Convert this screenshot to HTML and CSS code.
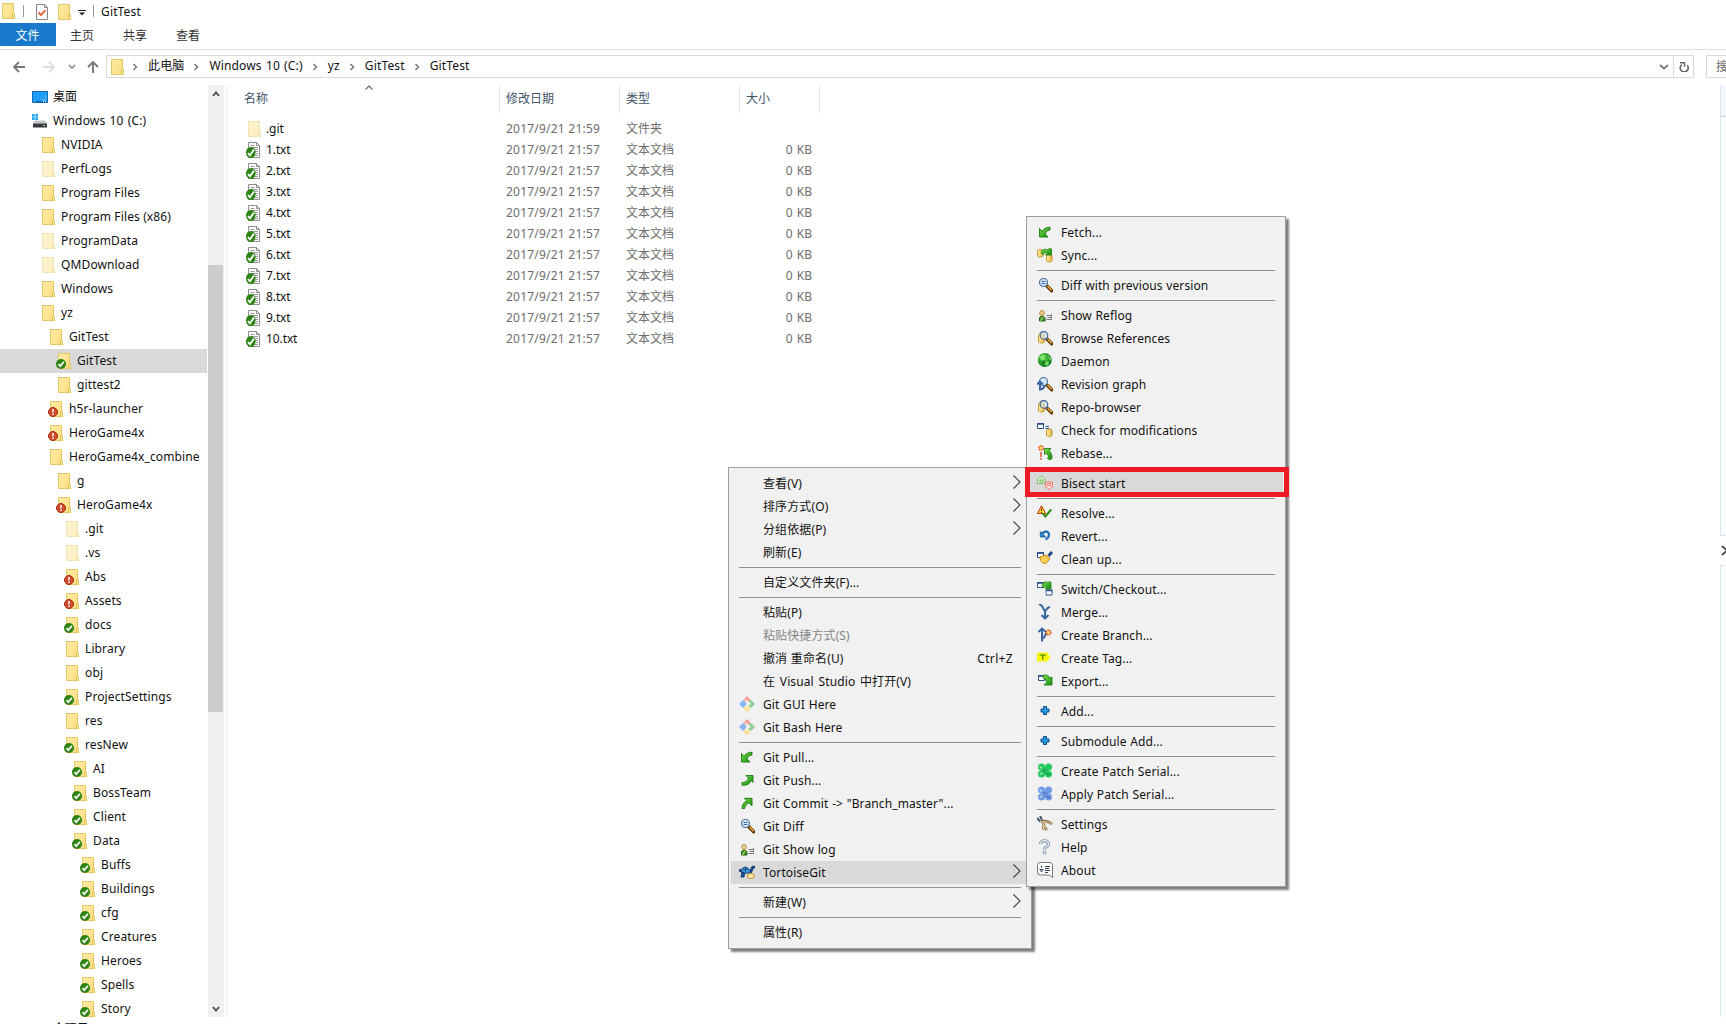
FILE: index.html
```
<!DOCTYPE html>
<html lang="zh-CN">
<head>
<meta charset="utf-8">
<title>GitTest</title>
<link rel="stylesheet" href="styles.css">
</head>
<body>
<svg class="defs" aria-hidden="true">
  <defs>
    <linearGradient id="gf" x1="0" y1="0" x2="1" y2="1"><stop offset="0" stop-color="#ffeba6"/><stop offset="1" stop-color="#fbdc7c"/></linearGradient>
    <linearGradient id="ga" x1="0" y1="0" x2="1" y2="1"><stop offset="0" stop-color="#7ce04c"/><stop offset="1" stop-color="#128a0c"/></linearGradient>
    <linearGradient id="gd" x1="0" y1="0" x2="1" y2="0"><stop offset="0" stop-color="#fff3a8"/><stop offset="1" stop-color="#e8b040"/></linearGradient>
    <radialGradient id="gg" cx=".4" cy=".35" r=".65"><stop offset="0" stop-color="#5fd84f"/><stop offset="1" stop-color="#0c7a1a"/></radialGradient>
  </defs>
  <symbol id="folder" viewBox="0 0 16 16"><path d="M2.500 .5h11v10.500h1v4.500h-12z" fill="url(#gf)" stroke="#e3c768"/><path d="M12.500 15.500v-4.500h2v4.500z" fill="#ffe69a" stroke="#dfbf58" stroke-width=".8"/></symbol>
  <symbol id="ok" viewBox="0 0 16 16"><circle cx="5" cy="11" r="5" fill="#2c8413"/><path d="M2.500 11.200l1.800 1.900 3.600-4.400" fill="none" stroke="#fff" stroke-width="1.700"/></symbol>
  <symbol id="bad" viewBox="0 0 16 16"><circle cx="5" cy="11" r="4.500" fill="#d24a28" stroke="#9c2c10"/><path d="M5 8v3.600M5 12.600v1.400" stroke="#fff" stroke-width="1.500"/></symbol>
  <symbol id="folder-ok" viewBox="0 0 16 16"><use href="#folder"/><use href="#ok"/></symbol>
  <symbol id="folder-bad" viewBox="0 0 16 16"><use href="#folder"/><use href="#bad"/></symbol>
  <symbol id="txt" viewBox="0 0 16 16"><path d="M2.500 .5h8l3 3v12h-11z" fill="#fff" stroke="#8f8f8f"/><path d="M10.500 .5v3h3" fill="none" stroke="#8f8f8f"/><path d="M4.500 3.500h4M4.500 5.500h7.500M7 7.500h5M9 9.500h3M10 11.500h2M9 13.500h3" stroke="#9a9a9a"/><ellipse cx="4.800" cy="10.500" rx="4.800" ry="5.500" fill="#2c8413"/><path d="M2 11l2 2.300 4-5.800" fill="none" stroke="#fff" stroke-width="1.800"/></symbol>
  <symbol id="desktop" viewBox="0 0 16 16"><path d="M.5 2.500h15v11h-15z" fill="#1f9dfa" stroke="#1568ac"/><path d="M8 12L15 5v7z" fill="#46b0fb" opacity=".6"/><path d="M1 12.500h14" stroke="#0e6dc0"/><path d="M2 12.500h1M11 12.500h1M13 12.500h1" stroke="#fff"/></symbol>
  <symbol id="drive" viewBox="0 0 16 16"><path d="M0 1h2.700v2.700h-2.700zM3.300 1h2.700v2.700h-2.700zM0 4.300h2.700v2.700h-2.700zM3.300 4.300h2.700v2.700h-2.700z" fill="#25a9ee"/><path d="M3 7.500h10l2 3h-14z" fill="#c3c5c8"/><path d="M1 10.500h14v4h-14z" fill="#36393d"/><path d="M11 12.500h2" stroke="#8df08d"/></symbol>
  <symbol id="prop" viewBox="0 0 16 16"><path d="M2.500 .5h8l3 3v12h-11z" fill="#fafafa" stroke="#888"/><path d="M10.500 .5v3h3" fill="none" stroke="#888"/><path d="M4.500 8.500l2.500 2.500 4.500-5" fill="none" stroke="#e2592c" stroke-width="1.800"/></symbol>
  <symbol id="pull" viewBox="0 0 16 16"><path d="M2.500 4.500v8.500h8.500l-2.800-2.700c.3-2.300 1.800-3.800 4.800-4.300v-2.800c-4 .1-6.800 1.800-7.900 4.300z" fill="url(#ga)" stroke="#187c10" stroke-width=".9"/></symbol>
  <symbol id="push" viewBox="0 0 16 16"><path d="M14 3.500h-7l2.200 2.200c0 3-2.200 4.600-6.200 4.800v2.700c5 .3 8.500-1.500 8.800-5l2.200 2.300z" fill="url(#ga)" stroke="#187c10" stroke-width=".9"/></symbol>
  <symbol id="commit" viewBox="0 0 16 16"><path d="M13 3.300h-7.600l2.300 2.300c-3 1.800-4.500 4.200-4.700 7.900h2.700c.3-2.700 1.700-4.700 4.300-5.700l3 3z" fill="url(#ga)" stroke="#187c10" stroke-width=".9"/></symbol>
  <symbol id="db" viewBox="0 0 16 16"><path d="M.5 3c0-2 5.500-2 5.500 0v4.500c0 2-5.500 2-5.500 0z" fill="url(#gd)" stroke="#bd8c26" stroke-width=".9"/></symbol>
  <symbol id="sync" viewBox="0 0 16 16"><use href="#db" y="1"/><use href="#db" x="9" y="6"/><path d="M4.500 6.500c0-4 3-5.300 6-3.500l1.500-1.500 2.500.5v6h-6l2-2c-2-1.200-3.500-.5-4 1.500z" fill="url(#ga)" stroke="#187c10" stroke-width=".8"/></symbol>
  <symbol id="lens" viewBox="0 0 16 16"><path d="M10 9l4.800 4.800" stroke="#5b3406" stroke-width="3.400" stroke-linecap="round"/><path d="M10.500 9l4.200 4.200" stroke="#e7a838" stroke-width="1.600"/><circle cx="6.500" cy="5.500" r="4" fill="#d6e8f8" stroke="#4a6b94" stroke-width="1.100"/></symbol>
  <symbol id="diff" viewBox="0 0 16 16"><use href="#lens"/><path d="M4.500 4.500h4M4.500 6.500h4" stroke="#3a6fb5"/></symbol>
  <symbol id="browse" viewBox="0 0 16 16"><use href="#lens"/><path d="M1.500 5.500c0-2 6-2 6 0v6c0 2-6 2-6 0z" fill="url(#gd)" stroke="#bd8c26" stroke-width=".9"/><circle cx="7" cy="5.500" r="3.800" fill="#d6e8f8" fill-opacity=".55" stroke="#4a6b94" stroke-width="1.100"/></symbol>
  <symbol id="log" viewBox="0 0 16 16"><path d="M2.500 14v-3.500q2.500-3 5.500 0v3.500z" fill="#3f9a22" stroke="#24600f"/><circle cx="5" cy="6" r="2.400" fill="#f2cf86" stroke="#a17b35" stroke-width=".8"/><path d="M3.500 14q1.500-3.500 3-4" stroke="#bfe59c" fill="none"/><path d="M9.500 8.500h5M10.500 10.500h4M9.500 12.500h5" stroke="#777"/><path d="M14.500 7v6" stroke="#888"/></symbol>
  <symbol id="globe" viewBox="0 0 16 16"><circle cx="7.800" cy="7" r="7" fill="url(#gg)"/><path d="M2 4l4-2.500 3 2-2 1 1 2-2 1.500-3-2zM11 3l3 2v3l-2-2zM8 8l4 1-1 4-3-1z" fill="#93ec79" opacity=".7"/><path d="M6 7l3 1-2 4-3-3z" fill="#0a6414" opacity=".6"/></symbol>
  <symbol id="graph" viewBox="0 0 16 16"><use href="#lens"/><path d="M0 8.500l3-3 3 3M3 6v7.500c2 0 3.500-1 5-4" fill="none" stroke="#3a66a4" stroke-width="2"/></symbol>
  <symbol id="win" viewBox="0 0 16 16"><path d="M.5 1.500h6v5h-6z" fill="#fff" stroke="#2b5189"/><path d="M0 2h7" stroke="#2b5189" stroke-width="1.600"/></symbol>
  <symbol id="check" viewBox="0 0 16 16"><use href="#win"/><path d="M8.500 4.500h3.500M8.500 6.500h3.500" stroke="#2b5189"/><use href="#db" x="9" y="5.500"/></symbol>
  <symbol id="rebase" viewBox="0 0 16 16"><circle cx="4" cy="3" r="2.200" fill="#ffe06a" stroke="#e4562a" stroke-width="1.500" stroke-dasharray="1.400 .6"/><path d="M4 7v5M4 13v1.800" stroke="#cf2a10" stroke-width="1.200"/><path d="M7.500 3.500h6.500l-1.800 2c2.300 2.500 3 5 2.800 8-1 1.400-3 1.400-4.500 0l1-2-1.500-3.500-2.500 1.500z" fill="url(#ga)" stroke="#187c10" stroke-width=".8"/></symbol>
  <symbol id="bisect" viewBox="0 0 16 16"><path d="M.5 8.500v-4.500l2-1 2-2.500 2 2.500 1.500 1v4.500zM3 5h3v2h-3z" fill="#e0f0da" stroke="#7cc06a"/><path d="M8.500 7h7v5l-1.500.5-2 2.500-2-2.500-1.500-.5zM10.500 8.500h3v2h-3z" fill="#fae2de" stroke="#e6796c"/></symbol>
  <symbol id="resolve" viewBox="0 0 16 16"><path d="M4.500 .8l4.200 7.700h-8.200z" fill="#ffe51c" stroke="#c62812"/><path d="M4.500 3.500v2.500M4.500 6.800v1" stroke="#5c1500"/><path d="M5.500 8l2.800 3.500 6-7" fill="none" stroke="#2a8a13" stroke-width="2"/></symbol>
  <symbol id="revert" viewBox="0 0 16 16"><path d="M5 6.500c1-3.500 7-4 7 0 0 2.500-1.500 4-3.500 5" fill="none" stroke="#1f70b8" stroke-width="2.200"/><path d="M3.300 3.500v5.500h5.500z" fill="#2d86cf" stroke="#155c9f" stroke-width=".8"/></symbol>
  <symbol id="clean" viewBox="0 0 16 16"><use href="#win"/><path d="M3 6l6-2 4 3.500-3.500 4.500c-3 1.500-6.500-1-6.500-6z" fill="#f9c846" stroke="#ca8a18"/><path d="M5 8l3 3M7 6.500l3 3" stroke="#fff0a0"/><path d="M11.500 5l3.500-4" stroke="#174a86" stroke-width="2.800"/></symbol>
  <symbol id="switch" viewBox="0 0 16 16"><use href="#win"/><use href="#win" x="8.500" y="7.500"/><path d="M5 5.500c0-4 3-5.500 6-4l1.500-1 1.500 1v6.300h-6l2-2c-1-1-2.500-.5-3 1z" fill="url(#ga)" stroke="#187c10" stroke-width=".8"/></symbol>
  <symbol id="merge" viewBox="0 0 16 16"><path d="M2 0l3 2 3 5.500 2.500-3.500 2.500-1M8 7v7M4.500 11l3.500 3.500 3.500-3.500" fill="none" stroke="#3a66a4" stroke-width="2"/></symbol>
  <symbol id="branch" viewBox="0 0 16 16"><path d="M5 14.500v-13M1.500 5l3.500-3.500 4 3.500M5 12c2-1 3.500-3 4-6" fill="none" stroke="#3a66a4" stroke-width="2"/><circle cx="11.500" cy="5.500" r="2.300" fill="#ffe06a" stroke="#e4562a" stroke-width="1.600" stroke-dasharray="1.300 .5"/></symbol>
  <symbol id="tag" viewBox="0 0 16 16"><path d="M0 2.500h10l3.500 4.500-3.500 4.500h-10z" fill="#fbf80c"/><path d="M2.500 5h6.500M5.700 5v4.500" stroke="#39791b" stroke-width="1.200"/></symbol>
  <symbol id="export" viewBox="0 0 16 16"><use href="#win" x="1" y="1"/><path d="M6 2.500c3-1.500 6 0 6.500 2.500l2.500-1v8h-8l2.500-2.200c0-2.500-1-4-3.500-5z" fill="url(#ga)" stroke="#187c10" stroke-width=".8"/></symbol>
  <symbol id="add" viewBox="0 0 16 16"><path d="M6.500 3.500h3v2.500h2.500v3h-2.500v2.500h-3v-2.500h-2.500v-3h2.500z" fill="#2a9ae0" stroke="#0d4f8c"/></symbol>
  <symbol id="patch" viewBox="0 0 16 16"><circle cx="4.500" cy="4" r="3.500" fill="currentColor"/><circle cx="11.500" cy="4" r="3.500" fill="currentColor"/><circle cx="4.500" cy="11" r="3.500" fill="currentColor"/><circle cx="11.500" cy="11" r="3.500" fill="currentColor"/><path d="M4.500 4.500h7v6h-7z" fill="currentColor"/><path d="M2.500 3.500l2.500 2M3 11.500l2.500-2" stroke="#fff" opacity=".6" stroke-width="1.500"/><path d="M9 10l4 2" stroke="#033" stroke-width="1.500" opacity=".3"/><path d="M6 7.500h.8M9 7.500h.8M7.500 6v.8M7.500 9.300v.8" stroke="#114" stroke-width=".8" opacity=".7"/></symbol>
  <symbol id="tools" viewBox="0 0 16 16"><path d="M0 2l3 3.500M3 0l2 4" stroke="#44556b" stroke-width="2"/><path d="M4 4.500c3.500 2 3 5 2 9M5.500 5.500c3-1 6 0 9.500 2.500M6.500 8c.5 3 2.500 5 3.500 6" fill="none" stroke="#7a6444" stroke-width="2.600"/><path d="M4.500 5c3 2 2.500 5 1.500 8.500M6 6c3-1 6 0 8.500 2M7 9c.5 2 1.500 3.500 2.800 4.600" fill="none" stroke="#dcc294" stroke-width="1.400"/></symbol>
  <symbol id="help" viewBox="0 0 16 16"><path d="M3.500 5c0-4.500 8-4.500 8 0 0 3-4 2.500-4 5.500" fill="none" stroke="#7890a8" stroke-width="3"/><path d="M3.500 5c0-4.500 8-4.500 8 0 0 3-4 2.500-4 5.500" fill="none" stroke="#edf3f9" stroke-width="1.200"/><circle cx="7.500" cy="13.500" r="1.500" fill="#edf3f9" stroke="#7890a8"/></symbol>
  <symbol id="about" viewBox="0 0 16 16"><path d="M3.500 .5h9q3 0 3 3v12l-3-2.500h-9q-3 0-3-3v-6.500q0-3 3-3z" fill="#fff" stroke="#777"/><path d="M4.500 3.800v2M2.500 7.500h4M3 9h3M8 4.500h5M8 6.500h4M8 8.500h5M8 10.500h3" stroke="#34435c" stroke-width="1.100"/></symbol>
  <symbol id="git" viewBox="0 0 16 16"><path d="M8 0l3.700 3.700-2 2-4-3.400z" fill="#f09a92"/><path d="M5.300 2.700l3 3-1.300 1.300-2.700-3z" fill="#f09a92"/><path d="M4 4l4 4-4 4-4-4z" fill="#8ab4f8"/><path d="M12 4l4 4-4 4-3-2.500 1.500-1.500-1.500-2z" fill="#8ccf94"/><path d="M8 16l-3.500-3.500 3.200-3 4 3z" fill="#fbe08a"/><path d="M6.500 4.500l2 2v6M8.500 6l3 2.500" stroke="#f6f6f6" stroke-width="1.300" fill="none"/></symbol>
  <symbol id="tortoise" viewBox="0 0 16 16"><path d="M2 6.500q4-7 9 0l1 2q-5 2-11-1z" fill="#3a9ad8" stroke="#123e78"/><path d="M11 7q1-3 2-4.500l2.500-.5v2l-1.500.5-1.500 4zM1 5l-1 2 3 1zM3 8.500l-1 4.500 3 0 .5-3.500z" fill="#1d55a4" stroke="#0d2f66" stroke-width=".9"/><path d="M4 5.500h5M6.500 3.500v4" stroke="#123e78" stroke-width=".8"/><ellipse cx="11.800" cy="12" rx="3.600" ry="2.500" fill="#ffe9a6" stroke="#c28b2b"/></symbol>
  <symbol id="chev" viewBox="0 0 8 14"><path d="M.5 .5l6.500 6.500-6.500 6.500" fill="none" stroke="#333c48" stroke-width="1.100"/></symbol>
  <symbol id="crumb" viewBox="0 0 6 8"><path d="M1.500 1l3 3-3 3" fill="none" stroke="#777" stroke-width="1.500"/></symbol>
</svg>

<header class="titlebar">
  <svg class="ic"><use href="#folder"/></svg><i class="bar"></i>
  <svg class="ic prop"><use href="#prop"/></svg><svg class="ic second"><use href="#folder"/></svg>
  <svg class="drop" viewBox="0 0 8 6"><path d="M0 .5h8" stroke="#222"/><path d="M1 2.500h6l-3 3z" fill="#222"/></svg>
  <i class="bar b2"></i><span class="title">GitTest</span>
</header>
<nav class="tabs"><span class="file">文件</span><span>主页</span><span>共享</span><span>查看</span></nav>
<div class="navrow">
  <svg class="arrow back" viewBox="0 0 12 12"><path d="M12 6h-11M6 1l-5 5 5 5" fill="none" stroke="#777" stroke-width="1.800"/></svg>
  <svg class="arrow fwd" viewBox="0 0 12 12"><path d="M0 6h11M6 1l5 5-5 5" fill="none" stroke="#ddd" stroke-width="1.800"/></svg>
  <svg class="recent" viewBox="0 0 8 6"><path d="M1 1l3 3 3-3" fill="none" stroke="#888" stroke-width="1.600"/></svg>
  <svg class="arrow up" viewBox="0 0 12 12"><path d="M6 12v-11M1 6l5-5 5 5" fill="none" stroke="#777" stroke-width="1.900"/></svg>
  <div class="address">
    <svg class="ic"><use href="#folder"/></svg>
    <svg class="cr"><use href="#crumb"/></svg><span>此电脑</span>
    <svg class="cr"><use href="#crumb"/></svg><span class="drive">Windows 10 (C:)</span>
    <svg class="cr"><use href="#crumb"/></svg><span>yz</span>
    <svg class="cr"><use href="#crumb"/></svg><span>GitTest</span>
    <svg class="cr"><use href="#crumb"/></svg><span>GitTest</span>
    <svg class="more" viewBox="0 0 10 6"><path d="M1 1l4 3.500 4-3.500" fill="none" stroke="#777" stroke-width="1.800"/></svg>
    <div class="refresh"><svg viewBox="0 0 10 10"><path d="M8.200 3.200a4 4 0 1 1-5.400-.5" fill="none" stroke="#666" stroke-width="1.600"/><path d="M1 .8h4.500v4" fill="none" stroke="#666" stroke-width="1.500"/></svg></div>
  </div>
  <div class="search">搜</div>
</div>

<main class="main">
  <aside class="tree">
    <div class="row l0"><svg class="ic"><use href="#desktop"/></svg>桌面</div>
    <div class="row l0 drive"><svg class="ic"><use href="#drive"/></svg>Windows 10 (C:)</div>
    <div class="row l1"><svg class="ic"><use href="#folder"/></svg>NVIDIA</div>
    <div class="row l1"><svg class="ic dim"><use href="#folder"/></svg>PerfLogs</div>
    <div class="row l1"><svg class="ic"><use href="#folder"/></svg>Program Files</div>
    <div class="row l1"><svg class="ic"><use href="#folder"/></svg>Program Files (x86)</div>
    <div class="row l1"><svg class="ic dim"><use href="#folder"/></svg>ProgramData</div>
    <div class="row l1"><svg class="ic dim"><use href="#folder"/></svg>QMDownload</div>
    <div class="row l1"><svg class="ic"><use href="#folder"/></svg>Windows</div>
    <div class="row l1"><svg class="ic"><use href="#folder"/></svg>yz</div>
    <div class="row l2"><svg class="ic"><use href="#folder"/></svg>GitTest</div>
    <div class="row l3 selected"><svg class="ic"><use href="#folder-ok"/></svg>GitTest</div>
    <div class="row l3"><svg class="ic"><use href="#folder"/></svg>gittest2</div>
    <div class="row l2"><svg class="ic"><use href="#folder-bad"/></svg>h5r-launcher</div>
    <div class="row l2"><svg class="ic"><use href="#folder-bad"/></svg>HeroGame4x</div>
    <div class="row l2"><svg class="ic"><use href="#folder"/></svg>HeroGame4x_combine</div>
    <div class="row l3"><svg class="ic"><use href="#folder"/></svg>g</div>
    <div class="row l3"><svg class="ic"><use href="#folder-bad"/></svg>HeroGame4x</div>
    <div class="row l4"><svg class="ic dim"><use href="#folder"/></svg>.git</div>
    <div class="row l4"><svg class="ic dim"><use href="#folder"/></svg>.vs</div>
    <div class="row l4"><svg class="ic"><use href="#folder-bad"/></svg>Abs</div>
    <div class="row l4"><svg class="ic"><use href="#folder-bad"/></svg>Assets</div>
    <div class="row l4"><svg class="ic"><use href="#folder-ok"/></svg>docs</div>
    <div class="row l4"><svg class="ic"><use href="#folder"/></svg>Library</div>
    <div class="row l4"><svg class="ic"><use href="#folder"/></svg>obj</div>
    <div class="row l4"><svg class="ic"><use href="#folder-ok"/></svg>ProjectSettings</div>
    <div class="row l4"><svg class="ic"><use href="#folder"/></svg>res</div>
    <div class="row l4"><svg class="ic"><use href="#folder-ok"/></svg>resNew</div>
    <div class="row l5"><svg class="ic"><use href="#folder-ok"/></svg>AI</div>
    <div class="row l5"><svg class="ic"><use href="#folder-ok"/></svg>BossTeam</div>
    <div class="row l5"><svg class="ic"><use href="#folder-ok"/></svg>Client</div>
    <div class="row l5"><svg class="ic"><use href="#folder-ok"/></svg>Data</div>
    <div class="row l6"><svg class="ic"><use href="#folder-ok"/></svg>Buffs</div>
    <div class="row l6"><svg class="ic"><use href="#folder-ok"/></svg>Buildings</div>
    <div class="row l6"><svg class="ic"><use href="#folder-ok"/></svg>cfg</div>
    <div class="row l6"><svg class="ic"><use href="#folder-ok"/></svg>Creatures</div>
    <div class="row l6"><svg class="ic"><use href="#folder-ok"/></svg>Heroes</div>
    <div class="row l6"><svg class="ic"><use href="#folder-ok"/></svg>Spells</div>
    <div class="row l6"><svg class="ic"><use href="#folder-ok"/></svg>Story</div>
  </aside>
  <div class="scroll">
    <svg viewBox="0 0 8 6"><path d="M1 5l3-3.500 3 3.500" fill="none" stroke="#505050" stroke-width="1.900"/></svg>
    <div class="thumb"></div>
    <svg viewBox="0 0 8 6"><path d="M1 1l3 3.500 3-3.500" fill="none" stroke="#505050" stroke-width="1.900"/></svg>
  </div>
  <section class="list">
    <div class="head"><span>名称<svg class="sort" viewBox="0 0 8 5"><path d="M.5 4.500l3.500-3.500 3.500 3.500" fill="none" stroke="#666" stroke-width="1.100"/></svg></span><span>修改日期</span><span>类型</span><span>大小</span></div>
    <div class="frow"><span class="name"><svg class="ic dim"><use href="#folder"/></svg>.git</span><span class="date">2017/9/21 21:59</span><span>文件夹</span><span></span></div>
    <div class="frow"><span class="name"><svg class="ic"><use href="#txt"/></svg>1.txt</span><span class="date">2017/9/21 21:57</span><span>文本文档</span><span>0 KB</span></div>
    <div class="frow"><span class="name"><svg class="ic"><use href="#txt"/></svg>2.txt</span><span class="date">2017/9/21 21:57</span><span>文本文档</span><span>0 KB</span></div>
    <div class="frow"><span class="name"><svg class="ic"><use href="#txt"/></svg>3.txt</span><span class="date">2017/9/21 21:57</span><span>文本文档</span><span>0 KB</span></div>
    <div class="frow"><span class="name"><svg class="ic"><use href="#txt"/></svg>4.txt</span><span class="date">2017/9/21 21:57</span><span>文本文档</span><span>0 KB</span></div>
    <div class="frow"><span class="name"><svg class="ic"><use href="#txt"/></svg>5.txt</span><span class="date">2017/9/21 21:57</span><span>文本文档</span><span>0 KB</span></div>
    <div class="frow"><span class="name"><svg class="ic"><use href="#txt"/></svg>6.txt</span><span class="date">2017/9/21 21:57</span><span>文本文档</span><span>0 KB</span></div>
    <div class="frow"><span class="name"><svg class="ic"><use href="#txt"/></svg>7.txt</span><span class="date">2017/9/21 21:57</span><span>文本文档</span><span>0 KB</span></div>
    <div class="frow"><span class="name"><svg class="ic"><use href="#txt"/></svg>8.txt</span><span class="date">2017/9/21 21:57</span><span>文本文档</span><span>0 KB</span></div>
    <div class="frow"><span class="name"><svg class="ic"><use href="#txt"/></svg>9.txt</span><span class="date">2017/9/21 21:57</span><span>文本文档</span><span>0 KB</span></div>
    <div class="frow"><span class="name"><svg class="ic"><use href="#txt"/></svg>10.txt</span><span class="date">2017/9/21 21:57</span><span>文本文档</span><span>0 KB</span></div>
  </section>
  <aside class="side">
    <div class="side-head"></div><div class="side-top"></div>
    <div class="side-gap"><svg viewBox="0 0 7 11"><path d="M1 1l5 4.500-5 4.500" fill="none" stroke="#444" stroke-width="1.800"/></svg></div>
    <div class="side-bottom"></div>
  </aside>
</main>
<footer class="status">11 个项目</footer>

<div class="menu ctx">
  <div class="item"><i></i>查看(V)<svg class="chev"><use href="#chev"/></svg></div>
  <div class="item"><i></i>排序方式(O)<svg class="chev"><use href="#chev"/></svg></div>
  <div class="item"><i></i>分组依据(P)<svg class="chev"><use href="#chev"/></svg></div>
  <div class="item"><i></i>刷新(E)</div>
  <hr>
  <div class="item"><i></i>自定义文件夹(F)...</div>
  <hr>
  <div class="item"><i></i>粘贴(P)</div>
  <div class="item off"><i></i>粘贴快捷方式(S)</div>
  <div class="item"><i></i>撤消 重命名(U)<span class="key">Ctrl+Z</span></div>
  <div class="item vs"><i></i>在 Visual Studio 中打开(V)</div>
  <div class="item"><svg class="mi"><use href="#git"/></svg>Git GUI Here</div>
  <div class="item"><svg class="mi"><use href="#git"/></svg>Git Bash Here</div>
  <hr>
  <div class="item"><svg class="mi"><use href="#pull"/></svg>Git Pull...</div>
  <div class="item"><svg class="mi"><use href="#push"/></svg>Git Push...</div>
  <div class="item"><svg class="mi"><use href="#commit"/></svg>Git Commit -&gt; "Branch_master"...</div>
  <div class="item"><svg class="mi"><use href="#diff"/></svg>Git Diff</div>
  <div class="item"><svg class="mi"><use href="#log"/></svg>Git Show log</div>
  <div class="item hot"><svg class="mi"><use href="#tortoise"/></svg>TortoiseGit<svg class="chev"><use href="#chev"/></svg></div>
  <hr>
  <div class="item"><i></i>新建(W)<svg class="chev"><use href="#chev"/></svg></div>
  <hr>
  <div class="item"><i></i>属性(R)</div>
</div>

<div class="menu sub">
  <div class="item"><svg class="mi"><use href="#pull"/></svg>Fetch...</div>
  <div class="item"><svg class="mi"><use href="#sync"/></svg>Sync...</div>
  <hr>
  <div class="item"><svg class="mi"><use href="#diff"/></svg>Diff with previous version</div>
  <hr>
  <div class="item"><svg class="mi"><use href="#log"/></svg>Show Reflog</div>
  <div class="item"><svg class="mi"><use href="#browse"/></svg>Browse References</div>
  <div class="item"><svg class="mi"><use href="#globe"/></svg>Daemon</div>
  <div class="item"><svg class="mi"><use href="#graph"/></svg>Revision graph</div>
  <div class="item"><svg class="mi"><use href="#browse"/></svg>Repo-browser</div>
  <div class="item"><svg class="mi"><use href="#check"/></svg>Check for modifications</div>
  <div class="item"><svg class="mi"><use href="#rebase"/></svg>Rebase...</div>
  <hr>
  <div class="item hot marked"><svg class="mi"><use href="#bisect"/></svg>Bisect start</div>
  <hr>
  <div class="item"><svg class="mi"><use href="#resolve"/></svg>Resolve...</div>
  <div class="item"><svg class="mi"><use href="#revert"/></svg>Revert...</div>
  <div class="item"><svg class="mi"><use href="#clean"/></svg>Clean up...</div>
  <hr>
  <div class="item"><svg class="mi"><use href="#switch"/></svg>Switch/Checkout...</div>
  <div class="item"><svg class="mi"><use href="#merge"/></svg>Merge...</div>
  <div class="item"><svg class="mi"><use href="#branch"/></svg>Create Branch...</div>
  <div class="item"><svg class="mi"><use href="#tag"/></svg>Create Tag...</div>
  <div class="item"><svg class="mi"><use href="#export"/></svg>Export...</div>
  <hr>
  <div class="item"><svg class="mi"><use href="#add"/></svg>Add...</div>
  <hr>
  <div class="item"><svg class="mi"><use href="#add"/></svg>Submodule Add...</div>
  <hr>
  <div class="item"><svg class="mi green"><use href="#patch"/></svg>Create Patch Serial...</div>
  <div class="item"><svg class="mi blue"><use href="#patch"/></svg>Apply Patch Serial...</div>
  <hr>
  <div class="item"><svg class="mi"><use href="#tools"/></svg>Settings</div>
  <div class="item"><svg class="mi"><use href="#help"/></svg>Help</div>
  <div class="item"><svg class="mi"><use href="#about"/></svg>About</div>
</div>
</body>
</html>
```
FILE: styles.css
```
* { box-sizing: border-box; }
html, body { margin: 0; height: 1024px; overflow: hidden; background: #fff; }
body {
  width: 1726px; position: relative; display: flex; flex-direction: column;
  font: 12px/16px "Noto Sans", "Noto Sans CJK SC", sans-serif; color: #111; white-space: nowrap;
}
svg { display: block; flex: none; }
.defs { position: absolute; width: 0; height: 0; }
.ic { width: 16px; height: 16px; }
.dim { opacity: .5; }

.titlebar { height: 23px; display: flex; align-items: flex-start; padding-top: 3px; }
.titlebar .bar { width: 1px; height: 12px; margin: 2px 0 0 7px; background: #999; }
.titlebar .prop { margin: 1px 0 0 10px; }
.titlebar .second { margin: 1px 0 0 6px; }
.titlebar .drop { width: 8px; height: 6px; margin: 7px 0 0 6px; }
.titlebar .bar.b2 { margin-left: 7px; }
.titlebar .title { margin: 1px 0 0 7px; letter-spacing: .15px; }

.tabs { height: 27px; display: flex; border-bottom: 1px solid #dadbdc; line-height: 25px; color: #333; }
.tabs span { width: 53px; padding-right: 1px; text-align: center; height: 23px; }
.tabs .file { width: 56px; background: #1979ca; color: #fff; }

.navrow { height: 35px; display: flex; align-items: flex-start; padding-top: 5px; }
.arrow { width: 12px; height: 12px; margin-top: 6px; }
.back { margin-left: 13px; }
.fwd { margin-left: 18px; }
.recent { width: 8px; height: 6px; margin: 9px 0 0 13px; }
.up { margin-left: 11px; }
.address { flex: none; margin-left: 7px; width: 1588px; height: 23px; border: 1px solid #d9d9d9; display: flex; align-items: center; padding-left: 2px; letter-spacing: .15px; }
.address .cr { width: 6px; height: 8px; margin: 0 10px 0 7px; }
.address span + .cr { margin-left: 9px; }
.address span { margin-top: -1px; }
.drive { letter-spacing: .15px; word-spacing: .9px; }
.address .more { width: 10px; height: 6px; margin-left: auto; margin-right: 4px; }
.refresh { width: 20px; height: 21px; border-left: 1px solid #d9d9d9; display: flex; align-items: center; justify-content: center; }
.refresh svg { width: 10px; height: 10px; }
.search { margin-left: 12px; width: 40px; flex: none; height: 23px; border: 1px solid #d9d9d9; padding: 3px 0 0 9px; color: #666; }

.main { height: 932px; display: flex; }
.tree { width: 207px; height: 932px; flex: none; letter-spacing: .12px; }
.row { height: 24px; display: flex; align-items: center; gap: 5px; line-height: 24px; color: #111; }
.l0 { padding-left: 32px; } .l1 { padding-left: 40px; } .l2 { padding-left: 48px; }
.l3 { padding-left: 56px; } .l4 { padding-left: 64px; } .l5 { padding-left: 72px; } .l6 { padding-left: 80px; }
.selected { background: #d9d9d9; }
.scroll { width: 16px; margin-left: 1px; background: #f0f0f0; flex: none; display: flex; flex-direction: column; align-items: center; padding: 6px 1px 5px 0; }
.scroll svg { width: 8px; height: 6px; }
.thumb { width: 15px; height: 447px; background: #cdcdcd; margin: 168px 0 auto 0; }
.list { flex: 1; margin-left: 2px; border-left: 1px solid #eee; padding-left: 17px; }
.head { display: grid; grid-template-columns: 256px 120px 120px 80px; height: 27px; margin-bottom: 6px; line-height: 28px; color: #44546a; }
.head span { border-right: 1px solid #e5e5e5; padding-left: 6px; position: relative; }
.head span:first-child { padding-left: 0; }
.sort { position: absolute; width: 8px; height: 5px; left: 121px; top: 0; }
.frow { display: grid; grid-template-columns: 262px 120px 120px 66px; height: 21px; line-height: 22px; color: #6d6d6d; }
.frow .name { display: flex; align-items: center; gap: 4px; padding-left: 2px; color: #111; letter-spacing: -.1px; }
.frow .date { letter-spacing: .22px; }
.frow span:last-child { text-align: right; word-spacing: 1px; }
.side { width: 6px; flex: none; display: flex; flex-direction: column; height: 932px; }
.side-head { height: 32px; background: #f1f7fd; border-left: 1px solid #dce6ee; border-bottom: 1px solid #ccd5dd; }
.side-top { height: 419px; background: #fbfdfe; border-left: 1px solid #dce6ee; border-bottom: 1px solid #dce6ee; }
.side-gap { height: 29px; display: flex; align-items: center; padding-left: 1px; }
.side-gap svg { width: 7px; height: 11px; }
.side-bottom { flex: 1; background: #fbfdfe; border-left: 1px solid #dce6ee; border-top: 1px solid #dce6ee; }
.status { height: 7px; overflow: hidden; padding: 4px 0 0 36px; }

.menu { position: absolute; background: #f1f1f1; border: 1px solid #a0a0a0; padding: 4px 2px; box-shadow: 3px 3px 2px rgba(0,0,0,.5); letter-spacing: .11px; word-spacing: .4px; }
.ctx { left: 728px; top: 467px; width: 304px; height: 482px; }
.sub { left: 1026px; top: 216px; width: 260px; height: 671px; }
.item { height: 23px; display: flex; padding-left: 8px; line-height: 23px; position: relative; }
.item .mi, .item i { width: 16px; height: 16px; margin: 3px 8px 0 0; flex: none; }
.item .chev { width: 8px; height: 14px; margin: 3px 8px 0 auto; }
.item .key { margin: 0 16px 0 auto; letter-spacing: .35px; }
.vs { word-spacing: 1.500px; }
.off { color: #858585; }
.hot { background: #d9d9d9; }
.menu hr { height: 1px; border: 0; background: #919191; margin: 3px 8px; }
.green { color: #22c95c; } .blue { color: #6f9ae8; }
.marked::after { content: ""; position: absolute; left: -4px; right: -6px; top: -5px; bottom: -2px; border: 5px solid #ed1c24; }
```
